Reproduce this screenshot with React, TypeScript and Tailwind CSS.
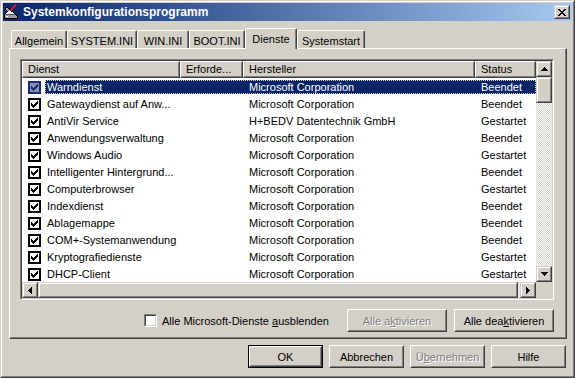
import React from "react";

type PixProps = { rows: string[]; colors: Record<string, string>; className?: string };
function Pix({ rows, colors, className }: PixProps) {
  const w = rows[0].length;
  const h = rows.length;
  const rects: React.ReactElement[] = [];
  rows.forEach((r, y) => {
    for (let x = 0; x < r.length; x++) {
      const c = colors[r[x]];
      if (c) rects.push(<rect key={`${x}-${y}`} x={x} y={y} width={1} height={1} fill={c} />);
    }
  });
  return (
    <svg width={w} height={h} viewBox={`0 0 ${w} ${h}`} shapeRendering="crispEdges" className={className}>
      {rects}
    </svg>
  );
}

const CLOSE_X = [
  "XX....XX",
  ".XX..XX.",
  "..XXXX..",
  "...XX...",
  "..XXXX..",
  ".XX..XX.",
  "XX....XX",
];

const CHECK = [
  "......X",
  ".....XX",
  "X...XXX",
  "XX.XXX.",
  "XXXXX..",
  ".XXX...",
  "..X....",
];

const ICON = [
  "...........r....",
  "..........rrr...",
  ".........rrrk...",
  "..kk....rrrk....",
  ".kggk..rrrk.....",
  ".kgggk.rrk......",
  "..kgggrrk.......",
  "...kwwwkk.......",
  "..kwwwwwwk......",
  ".kwwwwwwwwk.....",
  "kddddddddddk....",
  "kgggggggggggk...",
  "kgwwgggggggggk..",
  "kggggggggggggk..",
  ".kkkkkkkkkkkkk..",
  "................",
];

function UpArrow() {
  return (
    <svg width="7" height="4" viewBox="0 0 7 4" shapeRendering="crispEdges">
      <path d="M3 0h1v1h1v1h1v1h1v1H0V3h1V2h1V1h1z" fill="#000" />
    </svg>
  );
}
function DownArrow() {
  return (
    <svg width="7" height="4" viewBox="0 0 7 4" shapeRendering="crispEdges">
      <path d="M0 0h7v1h-1v1h-1v1h-1v1h-1v-1h-1v-1h-1v-1h-1z" fill="#000" />
    </svg>
  );
}
function LeftArrow() {
  return (
    <svg width="4" height="7" viewBox="0 0 4 7" shapeRendering="crispEdges">
      <path d="M3 0h1v7h-1v-1h-1v-1h-1v-1h-1v-1h1v-1h1v-1h1z" fill="#000" />
    </svg>
  );
}
function RightArrow() {
  return (
    <svg width="4" height="7" viewBox="0 0 4 7" shapeRendering="crispEdges">
      <path d="M0 0h1v1h1v1h1v1h1v1h-1v1h-1v1h-1v1h-1z" fill="#000" />
    </svg>
  );
}

function Raised({ className, children }: { className?: string; children?: React.ReactNode }) {
  return (
    <div className={`border border-t-[#d4d0c8] border-l-[#d4d0c8] border-r-[#404040] border-b-[#404040] bg-[#d4d0c8] ${className ?? ""}`}>
      <div className="w-full h-full border border-t-white border-l-white border-r-[#808080] border-b-[#808080] flex items-center justify-center">
        {children}
      </div>
    </div>
  );
}

function Button({
  children,
  w,
  disabled,
  isDefault,
}: {
  children: React.ReactNode;
  w: string;
  disabled?: boolean;
  isDefault?: boolean;
}) {
  const inner = (
    <div className="w-full h-full border border-t-white border-l-white border-r-[#404040] border-b-[#404040]">
      <div
        className={`w-full h-full border border-t-[#d4d0c8] border-l-[#d4d0c8] border-r-[#808080] border-b-[#808080] flex items-center justify-center ${
          disabled ? "text-[#808080] [text-shadow:1px_1px_0_#ffffff]" : "text-black"
        }`}
      >
        {children}
      </div>
    </div>
  );
  return (
    <div className={`h-[23px] ${w} ${isDefault ? "border border-black" : ""}`}>{inner}</div>
  );
}

function ListCheck({ selected }: { selected?: boolean }) {
  return (
    <div
      className={`w-[13px] h-[13px] border-2 flex items-center justify-center ${
        selected ? "border-[#1c2c70] bg-[#8390b8]" : "border-black bg-white"
      }`}
    >
      <Pix rows={CHECK} colors={{ X: selected ? "#1c2c70" : "#000000" }} />
    </div>
  );
}

const rows: { name: string; maker: string; status: string }[] = [
  { name: "Warndienst", maker: "Microsoft Corporation", status: "Beendet" },
  { name: "Gatewaydienst auf Anw...", maker: "Microsoft Corporation", status: "Beendet" },
  { name: "AntiVir Service", maker: "H+BEDV Datentechnik GmbH", status: "Gestartet" },
  { name: "Anwendungsverwaltung", maker: "Microsoft Corporation", status: "Beendet" },
  { name: "Windows Audio", maker: "Microsoft Corporation", status: "Gestartet" },
  { name: "Intelligenter Hintergrund...", maker: "Microsoft Corporation", status: "Beendet" },
  { name: "Computerbrowser", maker: "Microsoft Corporation", status: "Gestartet" },
  { name: "Indexdienst", maker: "Microsoft Corporation", status: "Beendet" },
  { name: "Ablagemappe", maker: "Microsoft Corporation", status: "Beendet" },
  { name: "COM+-Systemanwendung", maker: "Microsoft Corporation", status: "Beendet" },
  { name: "Kryptografiedienste", maker: "Microsoft Corporation", status: "Gestartet" },
  { name: "DHCP-Client", maker: "Microsoft Corporation", status: "Gestartet" },
];

function HeaderCell({ w, children }: { w: string; children?: React.ReactNode }) {
  return (
    <div
      className={`${w} h-[17px] shrink-0 border border-t-white border-l-white border-r-[#404040] border-b-[#404040] shadow-[inset_-1px_-1px_0_#808080] pl-[5px] whitespace-nowrap overflow-hidden`}
    >
      {children}
    </div>
  );
}

function Tab({ w, selected, children }: { w: string; selected?: boolean; children: React.ReactNode }) {
  return (
    <div
      className={`${w} shrink-0 border-t border-l border-r border-t-white border-l-white border-r-[#404040] shadow-[inset_-1px_0_0_#808080] rounded-tl-[2px] rounded-tr-[2px] flex justify-center pt-[3px] bg-[#d4d0c8] ${
        selected ? "h-[21px] -mb-px relative z-10" : "h-[18px]"
      }`}
    >
      {children}
    </div>
  );
}

export default function App() {
  return (
    <div className="w-[575px] h-[378px] bg-[#d4d0c8] font-['Liberation_Sans',Arial,sans-serif] text-[11px] leading-[14px] text-black select-none">
      <div className="w-full h-full border border-t-[#d4d0c8] border-l-[#d4d0c8] border-r-[#404040] border-b-[#404040]">
        <div className="w-full h-full border border-t-white border-l-white border-r-[#808080] border-b-[#808080] p-px flex flex-col">
          {/* Title bar */}
          <div className="h-[18px] shrink-0 flex items-center bg-gradient-to-r from-[#0a246a] to-[#a6caf0] pl-px pr-[2px]">
            <Pix
              rows={ICON}
              colors={{ k: "#000000", g: "#9c9c9c", w: "#ffffff", d: "#5c5c5c", r: "#e0103c" }}
            />
            <span className="ml-[3px] text-white font-bold text-[12px] leading-[14px]">Systemkonfigurationsprogramm</span>
            <div className="flex-1" />
            <Raised className="w-[16px] h-[14px]">
              <Pix rows={CLOSE_X} colors={{ X: "#000000" }} />
            </Raised>
          </div>

          {/* Body */}
          <div className="flex-1 flex flex-col pl-[6px] pr-[5px] pt-[7px]">
            {/* Tabs */}
            <div className="h-[20px] flex items-end pl-[2px]">
              <Tab w="w-[56px]">Allgemein</Tab>
              <Tab w="w-[70px]">SYSTEM.INI</Tab>
              <Tab w="w-[52px]">WIN.INI</Tab>
              <Tab w="w-[56px]">BOOT.INI</Tab>
              <Tab w="w-[52px]" selected>
                Dienste
              </Tab>
              <Tab w="w-[68px]">Systemstart</Tab>
            </div>

            {/* Panel */}
            <div className="h-[291px] w-[558px] border border-t-white border-l-white border-r-[#404040] border-b-[#404040] shadow-[inset_-1px_-1px_0_#808080] pl-[10px] pt-[10px]">
              {/* List view */}
              <div className="w-[534px] h-[241px] border border-t-[#808080] border-l-[#808080] border-r-white border-b-white">
                <div className="w-full h-full border border-t-[#404040] border-l-[#404040] border-r-[#d4d0c8] border-b-[#d4d0c8] bg-white flex flex-col">
                  <div className="h-[221px] flex">
                    <div className="w-[514px] flex flex-col">
                      <div className="flex bg-[#d4d0c8]">
                        <HeaderCell w="w-[158px]">Dienst</HeaderCell>
                        <HeaderCell w="w-[63px]">Erforde...</HeaderCell>
                        <HeaderCell w="w-[232px]">Hersteller</HeaderCell>
                        <HeaderCell w="w-[61px]">Status</HeaderCell>
                      </div>
                      {rows.map((r, i) => {
                        const sel = i === 0;
                        return (
                          <div key={r.name} className="h-[17px] flex">
                            <div className="w-[23px] shrink-0 pl-[6px] pt-[3px]">
                              <ListCheck selected={sel} />
                            </div>
                            <div
                              className={`mt-[2px] h-[14px] flex-1 flex border leading-[12px] whitespace-nowrap ${
                                sel
                                  ? "bg-[#0a246a] text-white border-dotted border-[#d8d0b8]"
                                  : "border-transparent"
                              }`}
                            >
                              <div className="w-[134px] shrink-0 pl-px">{r.name}</div>
                              <div className="w-[63px] shrink-0" />
                              <div className="w-[232px] shrink-0 pl-[6px]">{r.maker}</div>
                              <div className="flex-1 pl-[6px]">{r.status}</div>
                            </div>
                          </div>
                        );
                      })}
                    </div>
                    {/* Vertical scrollbar */}
                    <div className="w-[16px] flex flex-col">
                      <Raised className="w-[16px] h-[16px]">
                        <UpArrow />
                      </Raised>
                      <Raised className="w-[16px] h-[26px]" />
                      <div className="flex-1 [background-image:repeating-conic-gradient(#ffffff_0%_25%,#d4d0c8_0%_50%)] [background-size:2px_2px]" />
                      <Raised className="w-[16px] h-[16px]">
                        <DownArrow />
                      </Raised>
                    </div>
                  </div>
                  {/* Horizontal scrollbar */}
                  <div className="h-[16px] flex">
                    <div className="w-[514px] flex">
                      <Raised className="w-[16px] h-[16px]">
                        <LeftArrow />
                      </Raised>
                      <Raised className="flex-1 h-[16px]" />
                      <div className="w-[2px] [background-image:repeating-conic-gradient(#ffffff_0%_25%,#d4d0c8_0%_50%)] [background-size:2px_2px]" />
                      <Raised className="w-[16px] h-[16px]">
                        <RightArrow />
                      </Raised>
                    </div>
                    <div className="w-[16px] bg-[#d4d0c8]" />
                  </div>
                </div>
              </div>

              {/* Controls row */}
              <div className="w-[534px] mt-[9px] h-[23px] flex items-center">
                <div className="ml-[124px] w-[13px] h-[13px] border border-t-[#808080] border-l-[#808080] border-r-white border-b-white">
                  <div className="w-full h-full border border-t-[#404040] border-l-[#404040] border-r-[#d4d0c8] border-b-[#d4d0c8] bg-white" />
                </div>
                <span className="ml-[5px] whitespace-nowrap">
                  Alle Microsoft-Dienste <span className="underline">a</span>usblenden
                </span>
                <div className="flex-1" />
                <Button w="w-[100px]" disabled>
                  <span>
                    Alle a<span className="underline">k</span>tivieren
                  </span>
                </Button>
                <div className="w-[7px]" />
                <Button w="w-[100px]">
                  <span>
                    Alle dea<span className="underline">k</span>tivieren
                  </span>
                </Button>
              </div>
            </div>

            {/* Dialog buttons */}
            <div className="mt-[6px] flex justify-end gap-[6px] pr-px">
              <Button w="w-[75px]" isDefault>
                OK
              </Button>
              <Button w="w-[75px]">Abbrechen</Button>
              <Button w="w-[75px]" disabled>
                <span>
                  Ü<span className="underline">b</span>ernehmen
                </span>
              </Button>
              <Button w="w-[75px]">Hilfe</Button>
            </div>
          </div>
        </div>
      </div>
    </div>
  );
}
